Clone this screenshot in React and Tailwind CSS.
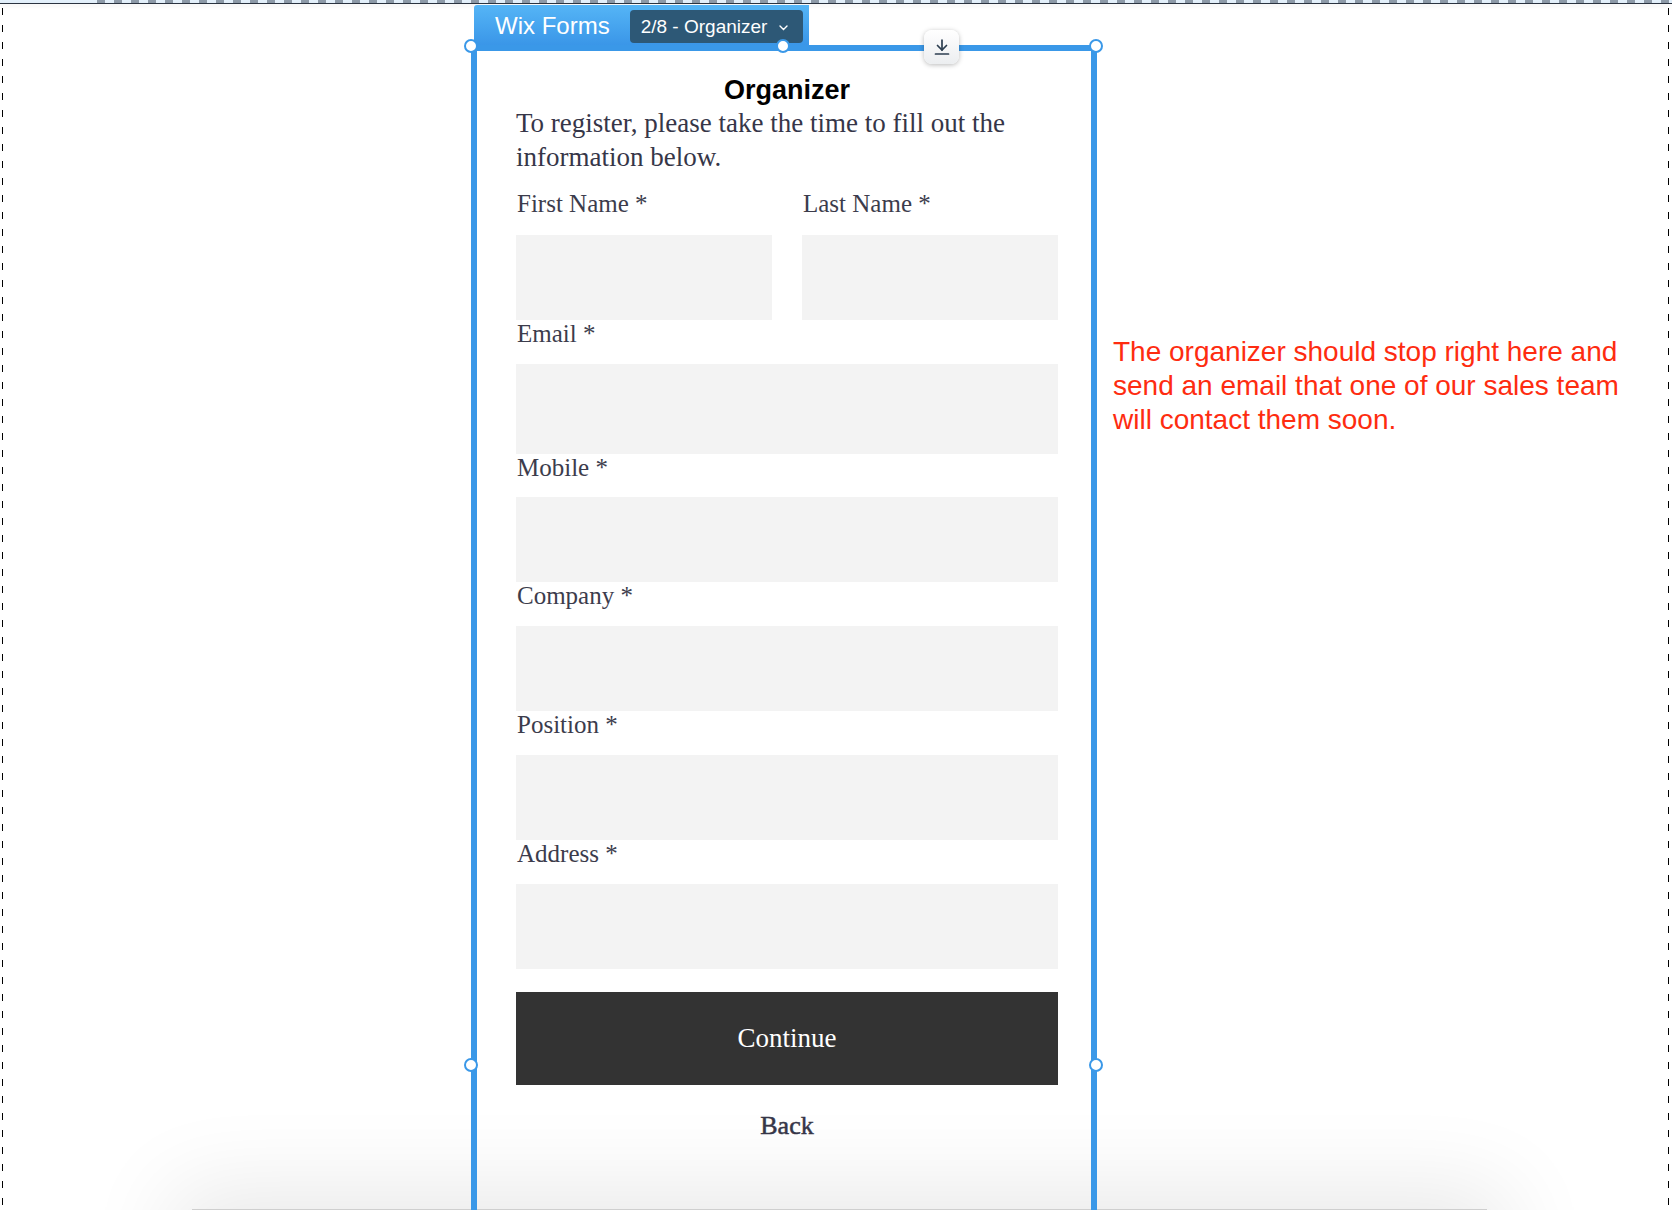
import React from "react";

const serif = "font-['Liberation_Serif',_'Times_New_Roman',_serif]";

const rows = [
  { label: "Email *", labelH: "h-[44px]", inputH: "h-[90px]" },
  { label: "Mobile *", labelH: "h-[43px]", inputH: "h-[85px]" },
  { label: "Company *", labelH: "h-[44px]", inputH: "h-[85px]" },
  { label: "Position *", labelH: "h-[44px]", inputH: "h-[85px]" },
  { label: "Address *", labelH: "h-[44px]", inputH: "h-[85px]" },
];

const Field = ({ label, labelH = "h-[45px]", inputH = "h-[85px]" }) => (
  <div>
    <div className={`${labelH} pl-[1px] pt-[1px] text-[25px] leading-[26px] text-[#3c3c4c]`}>{label}</div>
    <div className={`${inputH} bg-[#f3f3f3]`} />
  </div>
);

const Handle = ({ className }) => (
  <span className={`absolute h-[14px] w-[14px] rounded-full border-2 border-[#3a98e8] bg-white ${className}`} />
);

const DownloadIcon = () => (
  <svg width="16" height="18" viewBox="0 0 16 18" fill="none" stroke="#2c3e50" strokeWidth="1.7" strokeLinecap="round">
    <path d="M8 2v10" />
    <path d="M3.5 7.5L8 12l4.5-4.5" />
    <path d="M1.5 16h13" />
  </svg>
);

const Chevron = () => (
  <svg width="9" height="6" viewBox="0 0 9 6" fill="none" stroke="#ffffff" strokeWidth="1.4" strokeLinecap="round">
    <path d="M1 1l3.5 3.5L8 1" />
  </svg>
);

export default function App() {
  return (
    <div className="relative h-[1210px] w-[1672px] overflow-hidden bg-white font-['Liberation_Sans',_Arial,_sans-serif]">
      {/* shadow of the next page section */}
      <div className="absolute left-[192px] top-[1209px] h-[120px] w-[1295px] border-t border-[#cfcfcf] bg-[#eeeeee] shadow-[0_0_90px_20px_rgba(0,0,0,0.09)]" />

      <div className="relative z-10 flex h-full flex-col">
        {/* top ruler strip */}
        <div className="flex h-[3px] bg-[#e3f0fb]">
          <div className="ml-[97px] flex-1 bg-[repeating-linear-gradient(to_right,#8d9aa8_0,#8d9aa8_8px,transparent_8px,transparent_17px)]" />
        </div>
        <div className="h-px bg-[#2a3340] shadow-[0_2px_4px_rgba(0,0,0,0.15)]" />

        <div className="flex flex-1">
          <div className="ml-[2px] mt-[4px] w-px bg-[repeating-linear-gradient(to_bottom,#000_0,#000_7px,transparent_7px,transparent_17px)]" />

          <div className="flex flex-1 pl-[468px]">
            {/* form editor box */}
            <div className="mt-[1px] flex w-[626px] flex-col">
              <div className="ml-[3px] flex h-[40px] w-[335px] items-start rounded-tl-[3px] bg-linear-to-b from-[#55b5f6] to-[#3a96e8]">
                <span className="pl-[21px] pt-[7px] text-[24px] leading-[28px] text-white">Wix Forms</span>
                <div className="ml-[20px] mt-[5px] flex h-[33px] w-[173px] items-center rounded-[4px] bg-[#2d5876] pl-[11px]">
                  <span className="text-[19px] leading-[22px] text-white">2/8 - Organizer</span>
                  <span className="ml-[12px] mt-[2px]"><Chevron /></span>
                </div>
              </div>

              <div className="relative flex-1 border-x-[6px] border-t-[6px] border-[#3a98e8] pl-[39px] pr-[33px] pt-[23px]">
                <Handle className="left-[-13px] top-[-12px]" />
                <Handle className="left-[299px] top-[-12px]" />
                <Handle className="left-[612px] top-[-12px]" />
                <Handle className="left-[-13px] top-[1007px]" />
                <Handle className="left-[612px] top-[1007px]" />

                <div className="absolute left-[447px] top-[-21px] flex h-[34px] w-[35px] items-center justify-center rounded-[8px] bg-linear-to-b from-white to-[#eceef0] shadow-[0_1px_5px_rgba(0,0,0,0.28)]">
                  <DownloadIcon />
                </div>

                <h1 className="text-center text-[27px] font-bold leading-[32px] text-black">Organizer</h1>
                <p className={`${serif} text-[27px] leading-[34px] text-[#363648]`}>
                  To register, please take the time to fill out the information below.
                </p>

                <div className={`${serif} mt-[16px]`}>
                  <div className="grid grid-cols-2 gap-x-[30px]">
                    <Field label="First Name *" />
                    <Field label="Last Name *" />
                  </div>
                  {rows.map((r) => (
                    <Field key={r.label} label={r.label} labelH={r.labelH} inputH={r.inputH} />
                  ))}

                  <button className="mt-[23px] flex h-[93px] w-full items-center justify-center bg-[#333333] text-[27px] text-white">
                    Continue
                  </button>
                  <div className="mt-[24px] text-center text-[26px] leading-[34px] text-[#363648] [-webkit-text-stroke:0.5px_#363648]">Back</div>
                </div>
              </div>
            </div>

            {/* annotation */}
            <p className="ml-[16px] mt-[331px] w-[530px] text-[28px] leading-[34px] text-[#fe2c10]">
              The organizer should stop right here and send an email that one of our sales team will contact them soon.
            </p>
          </div>

          <div className="mr-[3px] mt-[4px] w-px bg-[repeating-linear-gradient(to_bottom,#000_0,#000_7px,transparent_7px,transparent_17px)]" />
        </div>
      </div>
    </div>
  );
}
